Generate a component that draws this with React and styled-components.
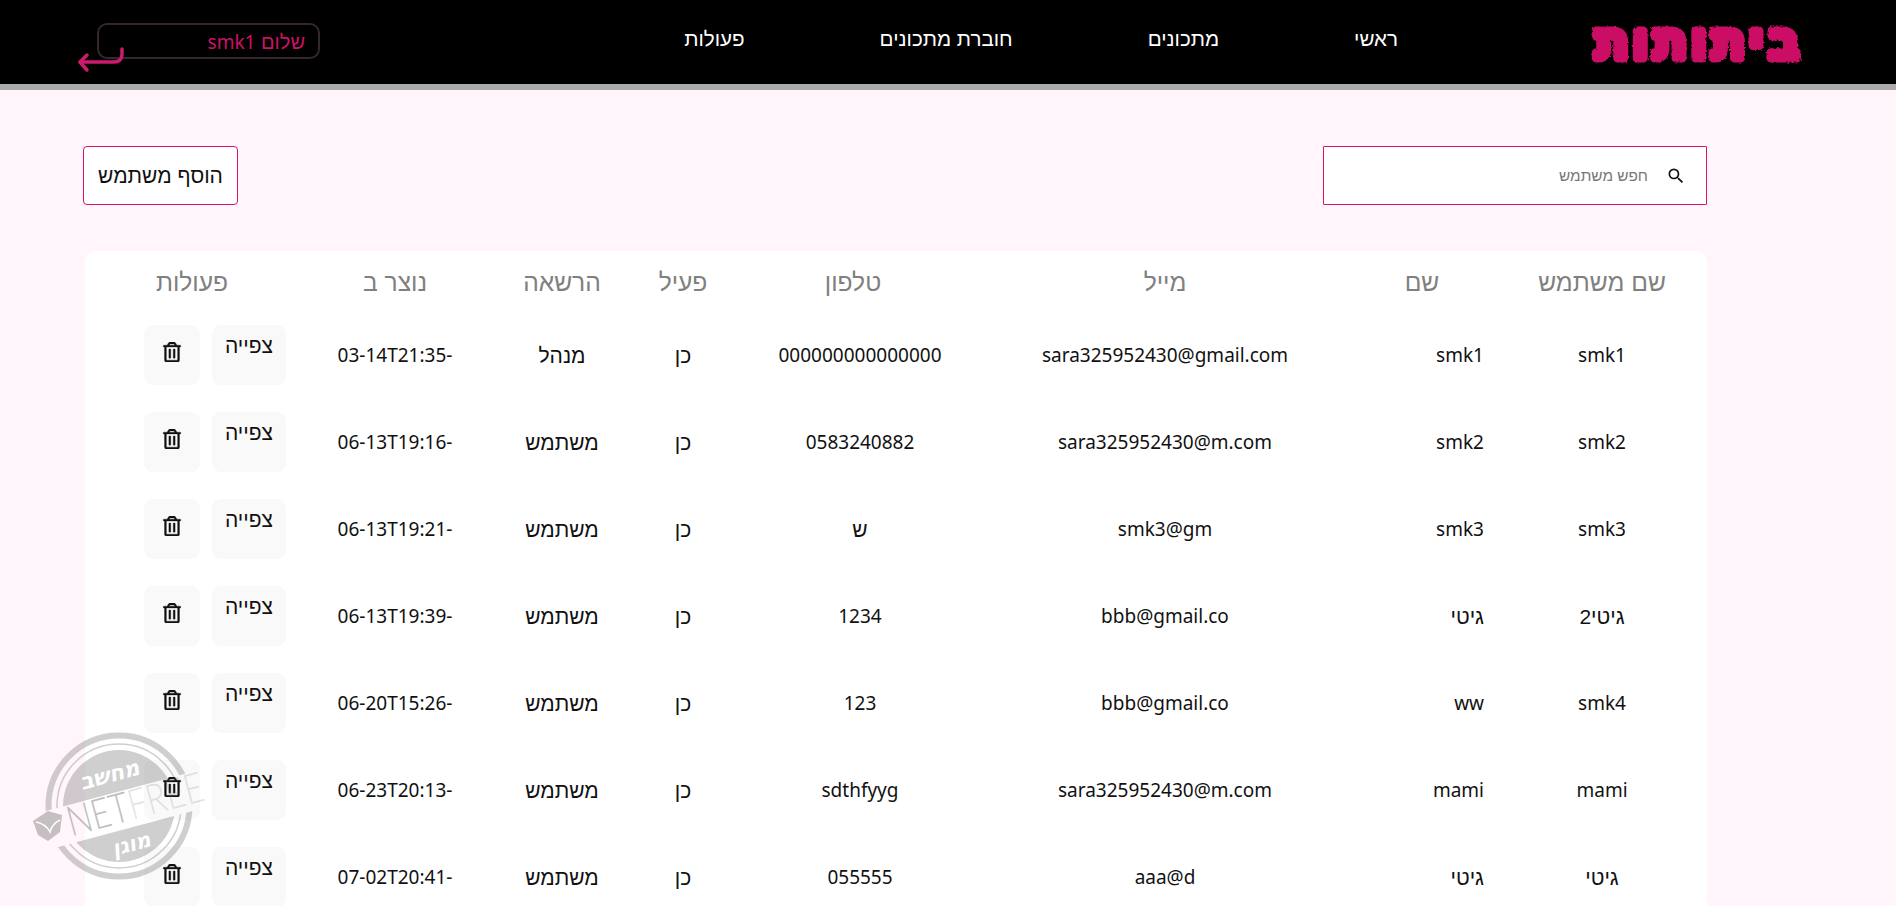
import React from "react";
import styled, { createGlobalStyle } from "styled-components";
import { FaRegTrashAlt } from "react-icons/fa";
import { MdSearch } from "react-icons/md";

const hebrewFont = `"Liberation Sans", sans-serif`;
const latinFont = `"Noto Sans", "Liberation Sans", sans-serif`;

const GlobalStyle = createGlobalStyle`
  html, body {
    margin: 0;
    height: 906px;
    overflow: hidden;
    background: #fff5fb;
  }
  body {
    font-family: ${hebrewFont};
    color: #111;
  }
`;

const Page = styled.div`
  direction: rtl;
  height: 906px;
  overflow: hidden;
  position: relative;
`;

const Header = styled.header`
  height: 84px;
  background: #000;
  border-bottom: 6px solid #aaa;
  display: flex;
  align-items: center;
  padding: 0 93px 0 97px;
`;

const Logo = styled.svg`
  display: block;
  flex: none;
`;

const Nav = styled.nav`
  display: flex;
  gap: 135px;
  margin-right: 192px;
  margin-top: -7px;
`;

const NavLink = styled.a`
  color: #fff;
  font-size: 20.6px;
  line-height: 26px;
`;

const Greeting = styled.div`
  position: relative;
  margin-right: auto;
  margin-top: -2px;
  width: 223px;
  height: 36px;
  box-sizing: border-box;
  border: 2px solid #33282d;
  border-radius: 10px;
  padding-right: 13px;
  color: #cc1166;
  font-size: 20px;
  line-height: 34px;
`;

const Latin = styled.span`
  font-family: ${latinFont};
  font-size: 19px;
`;

const LogoutIcon = styled.svg`
  position: absolute;
  left: -22px;
  top: 22px;
`;

const Main = styled.main`
  padding: 56px 189px 0 83px;
`;

const Toolbar = styled.div`
  display: flex;
  justify-content: space-between;
  margin-bottom: 46px;
`;

const SearchBox = styled.div`
  width: 384px;
  height: 59px;
  box-sizing: border-box;
  background: #fff;
  border: 1px solid #d6146e;
  border-radius: 1px;
  display: flex;
  align-items: center;
  gap: 16px;
  padding-right: 20px;
`;

const SearchInput = styled.input`
  flex: 1;
  border: 0;
  outline: 0;
  background: none;
  font-family: inherit;
  font-size: 15.4px;
  color: #333;
  &::placeholder {
    color: #777;
  }
`;

const AddButton = styled.button`
  width: 155px;
  height: 59px;
  background: #fff;
  border: 1px solid #d6146e;
  border-radius: 4px;
  font-family: inherit;
  font-size: 21px;
  color: #111;
  padding: 0;
`;

const Card = styled.div`
  margin-left: 2px;
  background: #fff;
  border-radius: 12px;
`;

const HeadRow = styled.div`
  display: grid;
  grid-template-columns: 210px 150px 364px 260px 80px 162px 172px 224px;
  height: 60px;
  align-items: center;
  color: #808080;
  font-size: 24.6px;
  text-align: center;
`;

const HeadCell = styled.div`
  padding-top: 4px;
  padding-right: ${(p) => p.$shift || 0}px;
`;

const Row = styled.div`
  display: grid;
  grid-template-columns: 210px 162px 340px 270px 84px 158px 176px 222px;
  height: 87px;
  align-items: center;
  text-align: center;
`;

const Cell = styled.div`
  font-family: ${(p) => (p.$hebrew ? hebrewFont : latinFont)};
  font-size: ${(p) => (p.$hebrew ? 21 : 19)}px;
  padding-top: ${(p) => (p.$hebrew ? 2 : 0)}px;
  text-align: ${(p) => (p.$start ? "right" : "center")};
  padding-right: ${(p) => (p.$start ? 13 : 0)}px;
`;

const Actions = styled.div`
  display: flex;
  gap: 12px;
  padding-right: 21px;
`;

const ViewButton = styled.button`
  width: 74px;
  height: 60px;
  border: 0;
  border-radius: 9px;
  background: #f9f9f9;
  font-family: inherit;
  font-size: 21px;
  color: #111;
  padding: 0 0 18px;
`;

const TrashButton = styled.button`
  width: 56px;
  height: 60px;
  border: 0;
  border-radius: 9px;
  background: #f9f9f9;
  color: #111;
  padding: 0 0 6px;
  display: flex;
  align-items: center;
  justify-content: center;
`;

const Stamp = styled.svg`
  position: absolute;
  left: 0;
  top: 706px;
  pointer-events: none;
`;

const users = [
  ["smk1", "smk1", "sara325952430@gmail.com", "000000000000000", "כן", "מנהל", "-03-14T21:35"],
  ["smk2", "smk2", "sara325952430@m.com", "0583240882", "כן", "משתמש", "-06-13T19:16"],
  ["smk3", "smk3", "smk3@gm", "ש", "כן", "משתמש", "-06-13T19:21"],
  ["גיטי2", "גיטי", "bbb@gmail.co", "1234", "כן", "משתמש", "-06-13T19:39"],
  ["smk4", "ww", "bbb@gmail.co", "123", "כן", "משתמש", "-06-20T15:26"],
  ["mami", "mami", "sara325952430@m.com", "sdthfyyg", "כן", "משתמש", "-06-23T20:13"],
  ["גיטי", "גיטי", "aaa@d", "055555", "כן", "משתמש", "-07-02T20:41"],
];

const heads = ["שם משתמש", "שם", "מייל", "טלפון", "פעיל", "הרשאה", "נוצר ב", "פעולות"];

const isHebrew = (text) => /[\u0590-\u05ff]/.test(text);

const SiteLogo = () => (
  <Logo width="213" height="52" viewBox="0 0 213 52">
    <defs>
      <filter id="rough" x="-5%" y="-10%" width="110%" height="120%">
        <feTurbulence type="fractalNoise" baseFrequency="0.45" numOctaves="1" seed="4" />
        <feDisplacementMap in="SourceGraphic" scale="3.5" />
      </filter>
    </defs>
    <text
      x="208"
      y="42"
      direction="rtl"
      fontFamily="Liberation Sans, sans-serif"
      fontSize="45"
      fontWeight="700"
      fill="#cc1166"
      stroke="#cc1166"
      strokeWidth="9"
      strokeLinejoin="round"
      textLength="203"
      filter="url(#rough)"
    >
      ביתותות
    </text>
  </Logo>
);

const NetfreeStamp = () => (
  <Stamp width="240" height="200" viewBox="0 706 240 200">
    <defs>
      <mask id="band">
        <rect x="0" y="706" width="240" height="200" fill="#fff" />
        <rect x="20" y="792" width="200" height="38" fill="#000" transform="rotate(-15 119 806)" />
      </mask>
    </defs>
    <g fill="#6e6e6e" fillOpacity="0.33">
      <g mask="url(#band)">
        <circle cx="119" cy="806" r="70.5" fill="none" stroke="#6e6e6e" strokeOpacity="0.33" strokeWidth="6" />
        <circle cx="119" cy="806" r="62" fill="none" stroke="#6e6e6e" strokeOpacity="0.33" strokeWidth="1.5" />
        <circle cx="119" cy="806" r="56" />
      </g>
      <path d="M33 821 L48 811 L62 815 L60 832 L48 841 L38 835 Z" fillOpacity="0.4" />
    </g>
    <path d="M36 822 Q46 824 50 832 Q52 824 60 820" fill="none" stroke="#fff" strokeWidth="1.5" />
    <g transform="rotate(-15 119 806)">
      <text
        direction="ltr"
        x="65"
        y="823"
        fontFamily="Lato, sans-serif"
        fontWeight="300"
        fontSize="42"
        textLength="140"
        lengthAdjust="spacingAndGlyphs"
      >
        <tspan fill="#808080" fillOpacity="0.5">NET</tspan>
        <tspan fill="#808080" fillOpacity="0.22">FREE</tspan>
      </text>
      <text x="118" y="781" fontFamily="DejaVu Sans, sans-serif" fontSize="22" fontWeight="700" fontStyle="italic" fill="#fff" textAnchor="middle">מחשב</text>
      <text x="121" y="853" fontFamily="DejaVu Sans, sans-serif" fontSize="21" fontWeight="700" fontStyle="italic" fill="#fff" textAnchor="middle">מוגן</text>
    </g>
  </Stamp>
);

export default function App() {
  return (
    <Page>
      <GlobalStyle />
      <Header>
        <SiteLogo />
        <Nav>
          <NavLink>ראשי</NavLink>
          <NavLink>מתכונים</NavLink>
          <NavLink>חוברת מתכונים</NavLink>
          <NavLink>פעולות</NavLink>
        </Nav>
        <Greeting>
          שלום <Latin>smk1</Latin>
          <LogoutIcon width="48" height="27" viewBox="0 0 48 27" fill="none" stroke="#cc1a6e" strokeWidth="3.5" strokeLinecap="round" strokeLinejoin="round">
            <path d="M45 2 V7 Q45 15 37 15 H3" />
            <path d="M10 8 L3 15 L10 23" />
          </LogoutIcon>
        </Greeting>
      </Header>
      <Main>
        <Toolbar>
          <SearchBox>
            <MdSearch size={20} color="#111" />
            <SearchInput placeholder="חפש משתמש" />
          </SearchBox>
          <AddButton>הוסף משתמש</AddButton>
        </Toolbar>
        <Card>
          <HeadRow>
            {heads.map((h, i) => (
              <HeadCell key={h} $shift={i === 7 ? 10 : 0}>{h}</HeadCell>
            ))}
          </HeadRow>
          {users.map((u, i) => (
            <Row key={i}>
              {u.map((value, c) => (
                <Cell key={c} $hebrew={isHebrew(value)} $start={c === 1}>{value}</Cell>
              ))}
              <Actions>
                <ViewButton>צפייה</ViewButton>
                <TrashButton><FaRegTrashAlt size={20} stroke="currentColor" strokeWidth={8} /></TrashButton>
              </Actions>
            </Row>
          ))}
        </Card>
      </Main>
      <NetfreeStamp />
    </Page>
  );
}
